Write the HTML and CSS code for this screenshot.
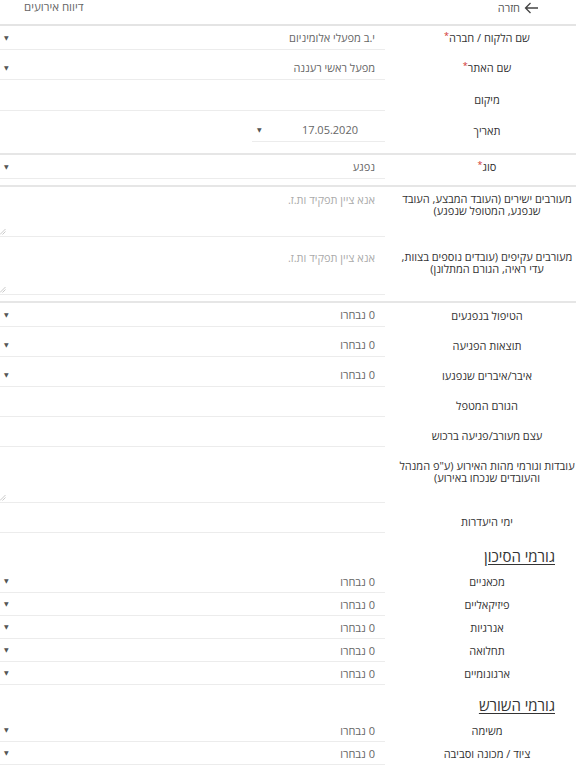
FILE: index.html
```html
<!DOCTYPE html>
<html lang="he" dir="rtl">
<head>
<meta charset="utf-8">
<title>דיווח אירועים</title>
<link rel="stylesheet" href="styles.css">
</head>
<body>
<header class="topbar">
  <a class="back" href="#">
    <svg class="back-icon" width="15" height="12" viewBox="0 0 15 12"><path d="M14 6H1.5M6.5 1L1.5 6l5 5" fill="none" stroke="#444" stroke-width="1.3"/></svg>
    <span>חזרה</span>
  </a>
  <span class="title">דיווח אירועים</span>
</header>

<main class="form">
  <section class="group g-top">
    <div class="row">
      <div class="lbl">שם הלקוח / חברה<span class="req">*</span></div>
      <div class="field"><span class="val">י.ב מפעלי אלומיניום</span><span class="caret">▼</span></div>
    </div>
    <div class="row">
      <div class="lbl">שם האתר<span class="req">*</span></div>
      <div class="field"><span class="val">מפעל ראשי רעננה</span><span class="caret">▼</span></div>
    </div>
    <div class="row">
      <div class="lbl">מיקום</div>
      <div class="field"></div>
    </div>
    <div class="row">
      <div class="lbl">תאריך</div>
      <div class="fieldwrap"><div class="field date"><span class="val">17.05.2020</span><span class="caret">▼</span></div></div>
    </div>
  </section>

  <section class="group g-one">
    <div class="row">
      <div class="lbl">סוג<span class="req">*</span></div>
      <div class="field"><span class="val">נפגע</span><span class="caret">▼</span></div>
    </div>
  </section>

  <section class="group g-text">
    <div class="row">
      <div class="lbl lbl-top">מעורבים ישירים (העובד המבצע, העובד שנפגע, המטופל שנפגע)</div>
      <div class="field area"><span class="ph">אנא ציין תפקיד ות.ז.</span><svg class="grip" width="6" height="6" viewBox="0 0 6 6"><path d="M0 5.5L5.5 0M2.5 5.5L5.5 2.5" stroke="#bbb" stroke-width="0.8"/></svg></div>
    </div>
    <div class="row">
      <div class="lbl lbl-top">מעורבים עקיפים (עובדים נוספים בצוות, עדי ראיה, הגורם המתלונן)</div>
      <div class="field area"><span class="ph">אנא ציין תפקיד ות.ז.</span><svg class="grip" width="6" height="6" viewBox="0 0 6 6"><path d="M0 5.5L5.5 0M2.5 5.5L5.5 2.5" stroke="#bbb" stroke-width="0.8"/></svg></div>
    </div>
  </section>

  <section class="g-plain">
    <div class="row">
      <div class="lbl">הטיפול בנפגעים</div>
      <div class="field"><span class="val">0 נבחרו</span><span class="caret">▼</span></div>
    </div>
    <div class="row">
      <div class="lbl">תוצאות הפגיעה</div>
      <div class="field"><span class="val">0 נבחרו</span><span class="caret">▼</span></div>
    </div>
    <div class="row">
      <div class="lbl">איבר/איברים שנפגעו</div>
      <div class="field"><span class="val">0 נבחרו</span><span class="caret">▼</span></div>
    </div>
    <div class="row">
      <div class="lbl">הגורם המטפל</div>
      <div class="field"></div>
    </div>
    <div class="row">
      <div class="lbl">עצם מעורב/פגיעה ברכוש</div>
      <div class="field"></div>
    </div>
    <div class="row">
      <div class="lbl lbl-top lbl-top2">עובדות וגורמי מהות האירוע (ע"פ המנהל והעובדים שנכחו באירוע)</div>
      <div class="field area"><svg class="grip" width="6" height="6" viewBox="0 0 6 6"><path d="M0 5.5L5.5 0M2.5 5.5L5.5 2.5" stroke="#bbb" stroke-width="0.8"/></svg></div>
    </div>
    <div class="row">
      <div class="lbl">ימי היעדרות</div>
      <div class="field"></div>
    </div>
  </section>

  <section class="cat cat-risk">
    <h2 class="cat-title">גורמי הסיכון</h2>
    <div class="row sm">
      <div class="lbl">מכאניים</div>
      <div class="field"><span class="val">0 נבחרו</span><span class="caret">▼</span></div>
    </div>
    <div class="row sm">
      <div class="lbl">פיזיקאליים</div>
      <div class="field"><span class="val">0 נבחרו</span><span class="caret">▼</span></div>
    </div>
    <div class="row sm">
      <div class="lbl">אנרגיות</div>
      <div class="field"><span class="val">0 נבחרו</span><span class="caret">▼</span></div>
    </div>
    <div class="row sm">
      <div class="lbl">תחלואה</div>
      <div class="field"><span class="val">0 נבחרו</span><span class="caret">▼</span></div>
    </div>
    <div class="row sm">
      <div class="lbl">ארגונומיים</div>
      <div class="field"><span class="val">0 נבחרו</span><span class="caret">▼</span></div>
    </div>
  </section>

  <section class="cat cat-root">
    <h2 class="cat-title">גורמי השורש</h2>
    <div class="row sm">
      <div class="lbl">משימה</div>
      <div class="field"><span class="val">0 נבחרו</span><span class="caret">▼</span></div>
    </div>
    <div class="row sm">
      <div class="lbl">ציוד / מכונה וסביבה</div>
      <div class="field"><span class="val">0 נבחרו</span><span class="caret">▼</span></div>
    </div>
  </section>
</main>
</body>
</html>
```

FILE: styles.css
```css
* { box-sizing: border-box; }

body {
  margin: 0;
  background: #fff;
  color: #333;
  font-family: "Open Sans", "Noto Sans", "DejaVu Sans", sans-serif;
  font-size: 11px;
  line-height: 13px;
  direction: rtl;
}

.topbar {
  display: flex;
  justify-content: space-between;
  align-items: flex-start;
  height: 26px;
  padding: 0 37px 0 24px;
  border-bottom: 2px solid #e4e4e4;
}

.back {
  display: flex;
  align-items: center;
  gap: 4px;
  color: #555;
  text-decoration: none;
  padding-top: 1px;
}

.title {
  color: #666;
  font-size: 11.5px;
}

.group {
  border-bottom: 2px solid #e6e6e6;
}

.row {
  display: grid;
  grid-template-columns: 191px 1fr;
  margin-bottom: 7px;
}

.row:last-child { margin-bottom: 0; }

.g-top { padding-bottom: 11px; }
.g-top .row { margin-bottom: 7px; }
.g-top .row:first-child { margin-bottom: 6px; }
.g-top .row:last-child { margin-bottom: 0; }
.g-one { padding-bottom: 6px; }
.g-text { padding-bottom: 6px; }
.g-text .row { margin-bottom: 8px; }
.g-text .row:last-child { margin-bottom: 0; }
.g-plain .row { margin-bottom: 6px; }
.g-plain .row:last-child { margin-bottom: 0; }

.lbl {
  padding-left: 13px;
  text-align: center;
  align-self: center;
  color: #333;
}

.lbl-top {
  align-self: start;
  padding-top: 6px;
  line-height: 12px;
}

.lbl-top2 { padding-top: 7px; }

.req {
  color: #d0312d;
  font-size: 9px;
  position: relative;
  top: -3px;
}

.field {
  height: 24px;
  border-bottom: 1px solid #ececec;
  display: flex;
  align-items: center;
  justify-content: space-between;
  padding: 0 10px 0 4px;
  color: #666;
  position: relative;
}

.row.sm { margin-bottom: 0; }
.row.sm .field { height: 23px; }

.fieldwrap {
  display: flex;
  justify-content: flex-start;
}

.field.date {
  width: 133px;
  padding-right: 27px;
  padding-left: 5px;
}

.caret {
  font-size: 6px;
  color: #555;
  line-height: 6px;
}

.area {
  height: 50px;
  align-items: flex-start;
  padding-top: 6px;
}

.ph { color: #aaa; }

.grip {
  position: absolute;
  left: 0;
  bottom: 1px;
}

.cat-risk { margin-top: 13px; }
.cat-root { margin-top: 10px; }

.cat-title {
  margin: 0 0 4px;
  padding-right: 21px;
  font-size: 15px;
  line-height: 20px;
  font-weight: normal;
  text-decoration: underline;
  text-underline-offset: 2px;
  color: #333;
}
```
